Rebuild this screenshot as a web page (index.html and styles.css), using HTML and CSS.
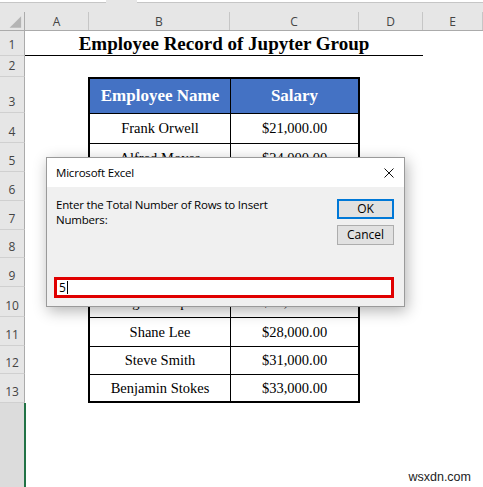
FILE: index.html
```html
<!DOCTYPE html>
<html lang="en">
<head>
<meta charset="utf-8">
<title>Employee Record of Jupyter Group</title>
<link rel="stylesheet" href="styles.css">
</head>
<body>
<div class="topbar"><div class="tb-box tb-left"></div><div class="tb-box tb-right"></div></div>
<div class="band"></div>
<div class="colheads">
  <div class="colhead corner"><svg width="25" height="19" viewBox="0 0 25 19"><polygon points="22,4 22,16 10,16" fill="#B4B4B4"/></svg></div>
  <div class="colhead ca">A</div>
  <div class="colhead cb">B</div>
  <div class="colhead cc">C</div>
  <div class="colhead cd">D</div>
  <div class="colhead ce">E</div>
</div>
<div class="main">
  <div class="rowheads">
    <div class="rowhead h25">1</div>
    <div class="rowhead h21">2</div>
    <div class="rowhead h36">3</div>
    <div class="rowhead h30">4</div>
    <div class="rowhead h29">5</div>
    <div class="rowhead h29">6</div>
    <div class="rowhead h29">7</div>
    <div class="rowhead h28">8</div>
    <div class="rowhead h29">9</div>
    <div class="rowhead h30">10</div>
    <div class="rowhead h29">11</div>
    <div class="rowhead h28">12</div>
    <div class="rowhead h29">13</div>
    <div class="rowrest"></div>
  </div>
  <div class="cells">
    <div class="title">Employee Record of Jupyter Group</div>
    <div class="records">
      <div class="cell name head">Employee Name</div><div class="cell head">Salary</div>
      <div class="cell name">Frank Orwell</div><div class="cell">$21,000.00</div>
      <div class="cell name">Alfred Moyes</div><div class="cell">$24,000.00</div>
      <div class="cell name"></div><div class="cell"></div>
      <div class="cell name"></div><div class="cell"></div>
      <div class="cell name"></div><div class="cell"></div>
      <div class="cell name"></div><div class="cell"></div>
      <div class="cell name">Morgan Chapman</div><div class="cell">$26,000.00</div>
      <div class="cell name">Shane Lee</div><div class="cell">$28,000.00</div>
      <div class="cell name">Steve Smith</div><div class="cell">$31,000.00</div>
      <div class="cell name last">Benjamin Stokes</div><div class="cell last">$33,000.00</div>
    </div>
  </div>
</div>

<div class="dialog">
  <div class="dlg-title">
    <span>Microsoft Excel</span>
    <svg class="close" width="10" height="10" viewBox="0 0 10 10"><path d="M0.5 0.5 L9.5 9.5 M9.5 0.5 L0.5 9.5" stroke="#111" stroke-width="1" fill="none"/></svg>
  </div>
  <div class="dlg-body">
    <div class="dlg-top">
      <p class="msg">Enter the Total Number of Rows to Insert<br>Numbers:</p>
      <div class="btns">
        <div class="btn btn-ok">OK</div>
        <div class="btn">Cancel</div>
      </div>
    </div>
    <div class="field"><span class="val">5</span><span class="caret"></span></div>
  </div>
</div>

<div class="watermark">wsxdn.com</div>
</body>
</html>
```

FILE: styles.css
```css
html, body {
  margin: 0;
  padding: 0;
}
body {
  width: 483px;
  height: 487px;
  overflow: hidden;
  position: relative;
  background: #fff;
  font-family: "Open Sans", "Noto Sans", sans-serif;
}

.topbar {
  display: flex;
  height: 3px;
  background: #E6E6E6;
}
.tb-box {
  height: 2px;
  background: #fff;
  border-bottom: 1px solid #C6C6C6;
}
.tb-left { width: 106px; }
.tb-right { flex: 1; margin-left: 31px; }
.band {
  height: 9px;
  background: #E6E6E6;
}

.colheads {
  display: flex;
  height: 19px;
  background: #E6E6E6;
  border-bottom: 1px solid #ABABAB;
  box-sizing: border-box;
}
.colhead {
  box-sizing: border-box;
  border-right: 1px solid #C6C6C6;
  display: flex;
  align-items: center;
  justify-content: center;
  font-size: 12px;
  color: #444;
}
.corner { width: 25px; border-right-color: #ABABAB; }
.corner svg { display: block; }
.ca { width: 64px; }
.cb { width: 141px; }
.cc { width: 129px; }
.cd { width: 64px; }
.ce { flex: 1; }

.main {
  display: flex;
  height: 456px;
}
.rowheads {
  width: 25px;
  flex: none;
  display: flex;
  flex-direction: column;
}
.rowhead {
  box-sizing: border-box;
  background: #E6E6E6;
  border-bottom: 1px solid #D0D0D0;
  border-right: 1px solid #ABABAB;
  display: flex;
  align-items: flex-end;
  justify-content: center;
  padding-bottom: 2px;
  font-size: 12px;
  line-height: 16px;
  color: #444;
}
.h21 { height: 21px; }
.h25 { height: 25px; }
.h28 { height: 28px; }
.h29 { height: 29px; }
.h30 { height: 30px; }
.h36 { height: 36px; }
.rowrest {
  flex: 1;
  width: 26px;
  box-sizing: border-box;
  background: #DCDCDC;
  border-right: 2px solid #217346;
}

.cells {
  flex: 1;
  display: grid;
  grid-template-columns: 64px 141px 129px 64px 1fr;
  grid-template-rows: 25px 21px 326px 1fr;
  font-family: "Liberation Serif", "Times New Roman", serif;
  color: #000;
}
.title {
  grid-column: 1 / 5;
  grid-row: 1;
  border-bottom: 1px solid #000;
  display: flex;
  align-items: center;
  justify-content: center;
  font-weight: bold;
  font-size: 19px;
  padding-top: 2px;
  box-sizing: border-box;
}
.records {
  grid-column: 2 / 4;
  grid-row: 3;
  margin: 0 -1px;
  border: 2px solid #000;
  display: grid;
  grid-template-columns: 141px 127px;
  grid-template-rows: 35px 30px 29px 29px 29px 28px 29px 30px 29px 28px 26px;
  font-size: 14.5px;
}
.cell {
  box-sizing: border-box;
  border-bottom: 1px solid #000;
  display: flex;
  align-items: center;
  justify-content: center;
  white-space: nowrap;
}
.cell.name { border-right: 1px solid #000; }
.cell.last { border-bottom: none; }
.cell.head {
  background: #4472C4;
  color: #fff;
  font-weight: bold;
  font-size: 17px;
}

.dialog {
  position: absolute;
  left: 46px;
  top: 157px;
  width: 359px;
  height: 150px;
  box-sizing: border-box;
  border: 1px solid #9A9A9A;
  box-shadow: 2px 4px 14px rgba(0, 0, 0, 0.3);
  display: flex;
  flex-direction: column;
  font-size: 11.5px;
  letter-spacing: -0.2px;
  color: #000;
}
.dlg-title {
  height: 29px;
  background: #fff;
  display: flex;
  align-items: center;
  justify-content: space-between;
  padding: 0 10px 0 9px;
}
.close { display: block; }
.dlg-body {
  flex: 1;
  background: #F0F0F0;
  display: flex;
  flex-direction: column;
  padding: 12px 10px 8px 7px;
}
.dlg-top {
  display: flex;
  justify-content: space-between;
  align-items: flex-start;
}
.msg {
  margin: -2px 0 0 2px;
  line-height: 15px;
}
.btns {
  display: flex;
  flex-direction: column;
  gap: 6px;
}
.btn {
  width: 57px;
  height: 20px;
  box-sizing: border-box;
  background: #E1E1E1;
  border: 1px solid #ADADAD;
  display: flex;
  align-items: center;
  justify-content: center;
  line-height: 1;
  font-size: 12px;
  letter-spacing: 0;
}
.btn-ok { border: 2px solid #0078D7; }
.field {
  margin-top: auto;
  height: 21px;
  box-sizing: border-box;
  border: 3px solid #E00000;
  background: #fff;
  display: flex;
  align-items: center;
  padding-left: 2px;
}
.val { line-height: 14px; font-size: 12px; }
.caret {
  width: 1px;
  height: 13px;
  background: #000;
  margin-left: 1px;
}

.watermark {
  position: absolute;
  right: 12px;
  bottom: 3px;
  font-family: "Liberation Sans", Arial, sans-serif;
  font-size: 12.5px;
  color: #222;
}
```
